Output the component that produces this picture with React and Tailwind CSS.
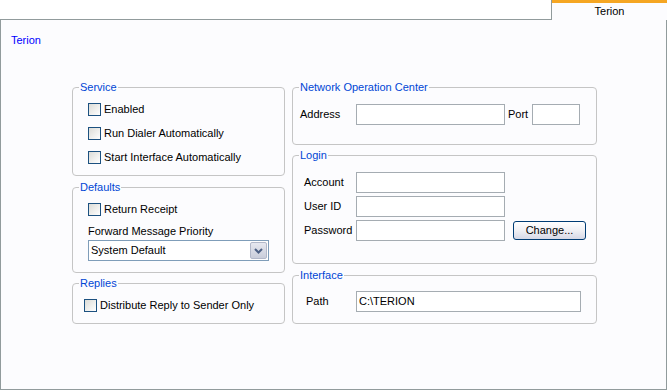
import React from 'react';

const font = { fontFamily: '"Liberation Sans", Arial, sans-serif' };

function Check({ label }) {
  return (
    <label className="flex items-center h-6 gap-[3px] text-[11px] text-black">
      <span className="w-[13px] h-[13px] border border-[#1c5180] bg-gradient-to-br from-[#dcdcd7] to-white shrink-0" />
      <span>{label}</span>
    </label>
  );
}

function Group({ title, className, inner, children }) {
  return (
    <fieldset className={`border border-[#c5c5c5] rounded-[4px] ${className}`}>
      <legend className="ml-[6px] px-[1px] text-[11px] leading-[14px] text-[#0046d5]">{title}</legend>
      <div className={inner}>{children}</div>
    </fieldset>
  );
}

function Field({ w, value = '' }) {
  return (
    <div className={`h-[21px] border border-[#a5acb2] bg-white flex items-center pl-[2px] text-[11px] text-black ${w}`}>
      {value}
    </div>
  );
}

export default function App() {
  return (
    <div className="w-[667px] h-[390px] bg-white flex flex-col" style={font}>
      {/* Tab strip */}
      <div className="h-[20px] flex shrink-0">
        <div className="flex-1 border-b border-[#919b9c]" />
        <div className="w-[116px] border-l border-[#919b9c] bg-[#fcfcfe] flex flex-col">
          <div className="h-[3px] bg-[#f5a623]" />
          <div className="flex-1 flex items-center justify-center text-[11px] text-black">Terion</div>
        </div>
      </div>

      {/* Page */}
      <div className="flex-1 border-l border-r border-b border-[#919b9c] bg-[#fcfcfe]">
        <div className="pl-[10px] pt-[13px] h-[60px] text-[11px] leading-[14px] text-[#0000ff]">Terion</div>

        <div className="flex pl-[71px] gap-[7px]">
          {/* Left column */}
          <div className="w-[213px] flex flex-col">
            <Group title="Service" className="h-[96px]" inner="pl-[15px] pt-[3px]">
              <Check label="Enabled" />
              <Check label="Run Dialer Automatically" />
              <Check label="Start Interface Automatically" />
            </Group>

            <Group title="Defaults" className="h-[93px] mt-[4px]" inner="pl-[15px] pt-[3px]">
              <Check label="Return Receipt" />
              <div className="h-[14px] mt-[3px] text-[11px] leading-[14px] text-black">Forward Message Priority</div>
              <div className="mt-[2px] w-[181px] h-[21px] border border-[#7f9db9] bg-white flex items-center justify-between">
                <span className="pl-[2px] text-[11px] text-black">System Default</span>
                <span className="w-[17px] h-[17px] mr-[1px] border border-[#b2b8c9] rounded-[2px] bg-gradient-to-b from-[#e6e8f0] to-[#c9cdda] flex items-center justify-center">
                  <svg width="9" height="6" viewBox="0 0 9 6">
                    <path d="M1 1 L4.5 4.5 L8 1" fill="none" stroke="#4d6185" strokeWidth="2" />
                  </svg>
                </span>
              </div>
            </Group>

            <Group title="Replies" className="h-[48px] mt-[3px]" inner="pl-[11px] pt-[3px]">
              <Check label="Distribute Reply to Sender Only" />
            </Group>
          </div>

          {/* Right column */}
          <div className="w-[305px] flex flex-col">
            <Group title="Network Operation Center" className="h-[65px]" inner="pl-[7px] pt-[10px]">
              <div className="flex items-center text-[11px] text-black">
                <span className="w-[56px]">Address</span>
                <Field w="w-[149px]" />
                <span className="w-[27px] pl-[3px]">Port</span>
                <Field w="w-[48px]" />
              </div>
            </Group>

            <Group title="Login" className="h-[116px] mt-[3px]" inner="pl-[11px] pt-[10px]">
              <div className="flex flex-col gap-[3px] text-[11px] text-black">
                <div className="flex items-center">
                  <span className="w-[52px]">Account</span>
                  <Field w="w-[149px]" />
                </div>
                <div className="flex items-center">
                  <span className="w-[52px]">User ID</span>
                  <Field w="w-[149px]" />
                </div>
                <div className="flex items-center">
                  <span className="w-[52px]">Password</span>
                  <Field w="w-[149px]" />
                  <button className="ml-[8px] w-[73px] h-[19px] border border-[#003c74] rounded-[3px] bg-gradient-to-b from-white via-[#f0f0f4] to-[#d6d8e6] text-[11px] text-black">
                    Change...
                  </button>
                </div>
              </div>
            </Group>

            <Group title="Interface" className="h-[56px] mt-[4px]" inner="pl-[13px] pt-[9px]">
              <div className="flex items-center text-[11px] text-black">
                <span className="w-[50px]">Path</span>
                <Field w="w-[225px]" value="C:\TERION" />
              </div>
            </Group>
          </div>
        </div>
      </div>
    </div>
  );
}
